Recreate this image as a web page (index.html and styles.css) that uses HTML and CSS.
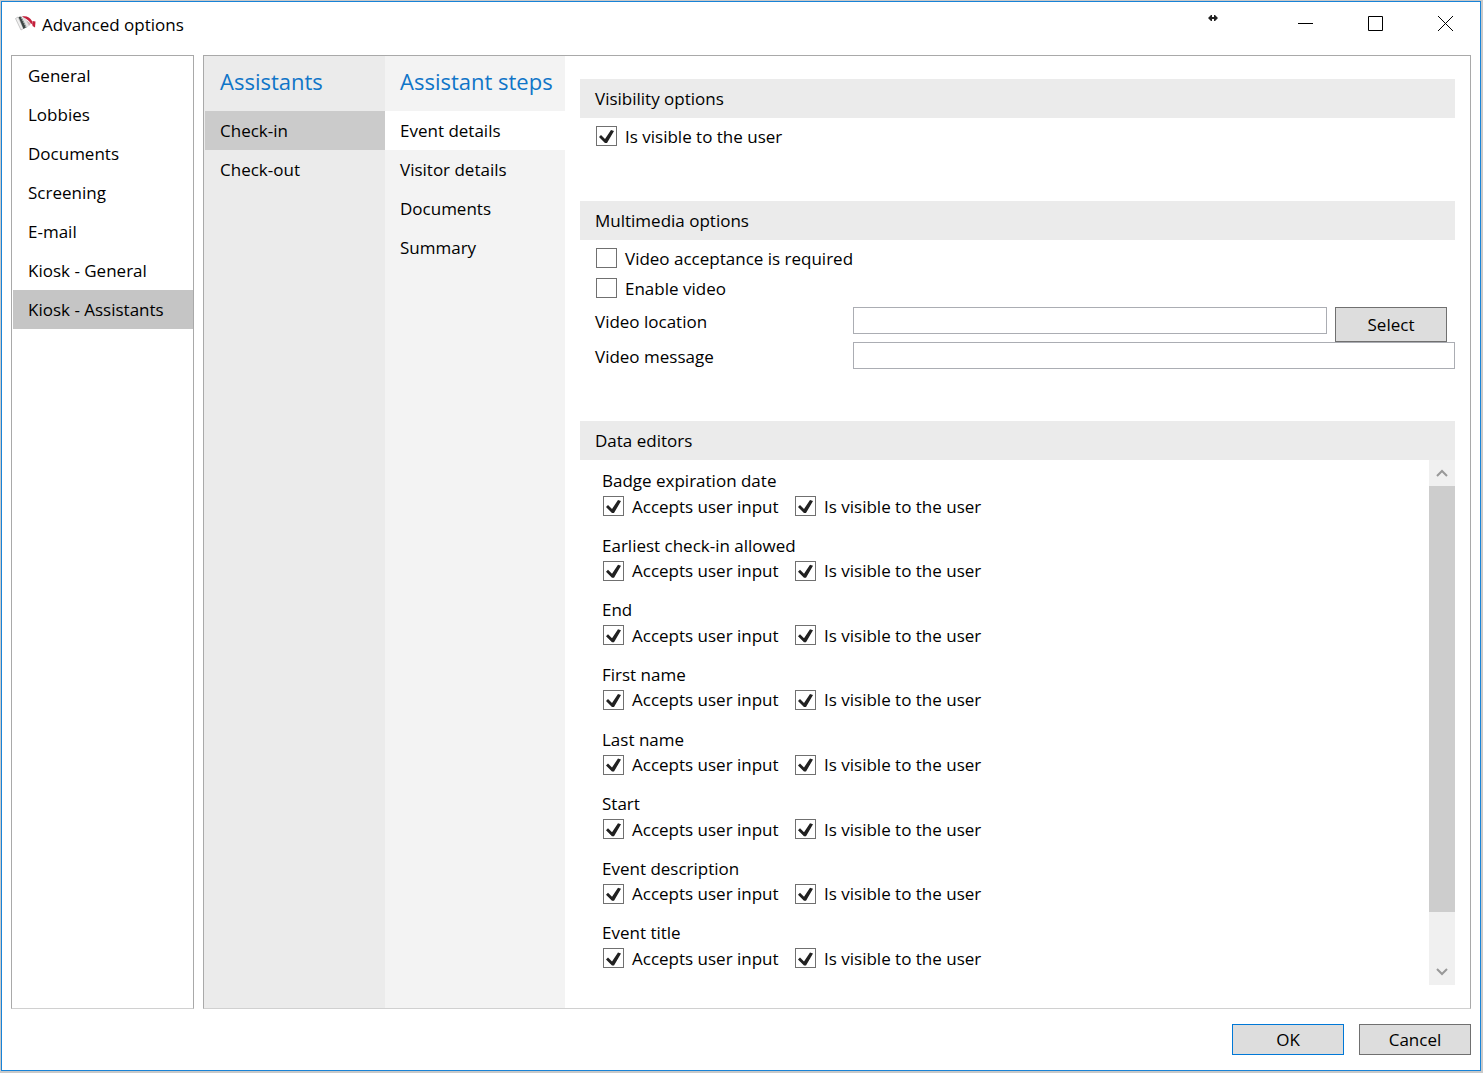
FILE: index.html
```html
<!DOCTYPE html>
<html lang="en">
<head>
    <meta charset="UTF-8">
    <meta name="viewport" content="width=device-width, initial-scale=1.0">
    <title>Advanced options</title>
    <link rel="stylesheet" href="styles.css">
</head>
<body>

<div class="window">
    <header class="titlebar">
        <svg class="app-icon" width="22" height="18" viewBox="0 0 22 18">
            <path d="M0.5 3.5L3 2L8.5 13.5L6 15Z" fill="#efefef" stroke="#bcbcbc" stroke-width="0.8"/>
            <path d="M3.5 2L5.5 1.5L11 12.5L8.5 14Z" fill="#3d4644"/>
            <path d="M6 1.5L11.5 12.5" stroke="#8d9794" stroke-width="1"/>
            <path d="M7.5 1.5L9 2L13.5 11L12 12Z" fill="#ececec" stroke="#c8c8c8" stroke-width="0.5"/>
            <path d="M7 1.5C11 0.5 15 2 17 6L18 10L15.5 8C13.5 5 11 3.5 7 1.5Z" fill="#c4203c"/>
            <path d="M11 5L16 8.5L14 11Z" fill="#cdb4b8"/>
            <path d="M17.5 6L20.5 6.5L20 12.5L17.5 11Z" fill="#c4203c"/>
        </svg>
        <h1 class="title">Advanced options</h1>
        <svg class="resize" width="10" height="8" viewBox="0 0 10 8">
            <path d="M0 4L3 1H4V3H6V1H7L10 4L7 7H6V5H4V7H3Z" fill="#222"/>
        </svg>
        <button class="caption" aria-label="Minimize">
            <svg width="15" height="15" viewBox="0 0 15 15"><path d="M0 7.5H15" stroke="#000"/></svg>
        </button>
        <button class="caption" aria-label="Maximize">
            <svg width="15" height="15" viewBox="0 0 15 15"><path d="M0.5 0.5H14.5V14.5H0.5Z" stroke="#000" fill="none"/></svg>
        </button>
        <button class="caption" aria-label="Close">
            <svg width="15" height="15" viewBox="0 0 15 15"><path d="M0 0L15 15M15 0L0 15" stroke="#000"/></svg>
        </button>
    </header>

    <div class="content">
        <nav class="box sidebar">
            <a class="item" href="#">General</a>
            <a class="item" href="#">Lobbies</a>
            <a class="item" href="#">Documents</a>
            <a class="item" href="#">Screening</a>
            <a class="item" href="#">E-mail</a>
            <a class="item" href="#">Kiosk - General</a>
            <a class="item selected" href="#">Kiosk - Assistants</a>
        </nav>

        <main class="box main">
            <nav class="column assistants">
                <h2>Assistants</h2>
                <a class="item selected" href="#">Check-in</a>
                <a class="item" href="#">Check-out</a>
            </nav>
            <nav class="column steps">
                <h2>Assistant steps</h2>
                <a class="item selected" href="#">Event details</a>
                <a class="item" href="#">Visitor details</a>
                <a class="item" href="#">Documents</a>
                <a class="item" href="#">Summary</a>
            </nav>

            <div class="options">
                <section class="section">
                    <h3>Visibility options</h3>
                    <label class="check"><input type="checkbox" checked>Is visible to the user</label>
                </section>

                <section class="section">
                    <h3>Multimedia options</h3>
                    <label class="check"><input type="checkbox">Video acceptance is required</label>
                    <label class="check"><input type="checkbox">Enable video</label>
                    <div class="fields">
                        <label for="location">Video location</label>
                        <div class="file">
                            <input class="text" type="text" id="location">
                            <button class="button select">Select</button>
                        </div>
                        <label for="message">Video message</label>
                        <input class="text" type="text" id="message">
                    </div>
                </section>

                <section class="section editors">
                    <h3>Data editors</h3>
                    <div class="scroller">
                        <div class="list">
                            <fieldset class="editor">
                                <legend>Badge expiration date</legend>
                                <label><input type="checkbox" checked>Accepts user input</label>
                                <label><input type="checkbox" checked>Is visible to the user</label>
                            </fieldset>
                            <fieldset class="editor">
                                <legend>Earliest check-in allowed</legend>
                                <label><input type="checkbox" checked>Accepts user input</label>
                                <label><input type="checkbox" checked>Is visible to the user</label>
                            </fieldset>
                            <fieldset class="editor">
                                <legend>End</legend>
                                <label><input type="checkbox" checked>Accepts user input</label>
                                <label><input type="checkbox" checked>Is visible to the user</label>
                            </fieldset>
                            <fieldset class="editor">
                                <legend>First name</legend>
                                <label><input type="checkbox" checked>Accepts user input</label>
                                <label><input type="checkbox" checked>Is visible to the user</label>
                            </fieldset>
                            <fieldset class="editor">
                                <legend>Last name</legend>
                                <label><input type="checkbox" checked>Accepts user input</label>
                                <label><input type="checkbox" checked>Is visible to the user</label>
                            </fieldset>
                            <fieldset class="editor">
                                <legend>Start</legend>
                                <label><input type="checkbox" checked>Accepts user input</label>
                                <label><input type="checkbox" checked>Is visible to the user</label>
                            </fieldset>
                            <fieldset class="editor">
                                <legend>Event description</legend>
                                <label><input type="checkbox" checked>Accepts user input</label>
                                <label><input type="checkbox" checked>Is visible to the user</label>
                            </fieldset>
                            <fieldset class="editor">
                                <legend>Event title</legend>
                                <label><input type="checkbox" checked>Accepts user input</label>
                                <label><input type="checkbox" checked>Is visible to the user</label>
                            </fieldset>
                        </div>
                        <div class="scrollbar">
                            <button class="arrow" aria-label="Scroll up">
                                <svg width="12" height="8" viewBox="0 0 12 8"><path d="M1 7L6 2L11 7" stroke="#999" stroke-width="2" fill="none"/></svg>
                            </button>
                            <div class="track"><div class="thumb"></div></div>
                            <button class="arrow" aria-label="Scroll down">
                                <svg width="12" height="8" viewBox="0 0 12 8"><path d="M1 1L6 6L11 1" stroke="#999" stroke-width="2" fill="none"/></svg>
                            </button>
                        </div>
                    </div>
                </section>
            </div>
        </main>
    </div>

    <footer class="footer">
        <button class="button default">OK</button>
        <button class="button">Cancel</button>
    </footer>
</div>

</body>
</html>
```
FILE: styles.css
```css
* {
    box-sizing: border-box;
    margin: 0;
    padding: 0;
}
body {
    height: 100vh;
    padding: 1px 2px 2px 1px;
    background-color: #c9c9c9;
    font-family: 'Open Sans', 'Noto Sans', sans-serif;
    font-size: 17px;
    color: #000;
}
button, input {
    font: inherit;
    color: inherit;
}
a {
    color: inherit;
    text-decoration: none;
}
.window {
    display: flex;
    flex-direction: column;
    height: 100%;
    background-color: #fff;
    border: 1px solid #1883d7;
}

/* Title bar */
.titlebar {
    display: flex;
    height: 53px;
    padding-left: 13px;
}
.app-icon {
    margin-top: 13px;
}
.title {
    flex: 1;
    margin-left: 5px;
    font-size: 17px;
    font-weight: normal;
    line-height: 45px;
}
.resize {
    margin: 12px 52px 0 0;
}
.caption {
    display: flex;
    align-items: center;
    justify-content: center;
    width: 70px;
    height: 43px;
    background: none;
    border: none;
}

/* Panes */
.content {
    display: flex;
    flex: 1;
    gap: 9px;
    min-height: 0;
    padding: 0 9px;
}
.box {
    border: 1px solid #a9a9a9;
    border-bottom-color: #d0d0d0;
}
.sidebar {
    width: 183px;
    padding-left: 1px;
}
.item {
    display: block;
    height: 39px;
    padding-left: 15px;
    line-height: 40px;
    white-space: nowrap;
}
.sidebar .selected {
    background-color: #c5c5c5;
}
.main {
    display: flex;
    flex: 1;
}
.column {
    width: 180px;
}
.column h2 {
    height: 55px;
    padding-left: 15px;
    font-size: 22px;
    font-weight: normal;
    line-height: 50px;
    color: #0f75c8;
    white-space: nowrap;
}
.assistants {
    width: 181px;
    padding-left: 1px;
    background-color: #ebebeb;
}
.assistants .selected {
    background-color: #cbcbcb;
}
.steps {
    background-color: #f3f3f3;
}
.steps .selected {
    background-color: #fff;
}

/* Options */
.options {
    display: flex;
    flex: 1;
    flex-direction: column;
    gap: 50px;
    padding: 23px 15px;
}
.section h3 {
    height: 39px;
    margin-bottom: 3px;
    padding-left: 15px;
    background-color: #ebebeb;
    font-size: 17px;
    font-weight: normal;
    line-height: 40px;
}
.check {
    display: flex;
    align-items: center;
    height: 30px;
    padding-left: 16px;
}
input[type="checkbox"] {
    appearance: none;
    width: 21px;
    height: 20px;
    margin-right: 8px;
    background-color: #fff;
    border: 1px solid #707070;
}
input[type="checkbox"]:checked::before {
    content: '';
    display: block;
    width: 19px;
    height: 18px;
    background-color: #212121;
    clip-path: polygon(2px 10px, 4px 8px, 8px 12px, 14px 3px, 17px 4px, 10px 16px, 8px 16px);
}
.fields {
    display: grid;
    grid-template-columns: 273px 1fr;
    padding: 4px 0 2px;
}
.fields label {
    height: 27px;
    padding-left: 15px;
    line-height: 30px;
}
.file {
    display: flex;
    gap: 8px;
    padding-right: 8px;
}
.text {
    flex: 1;
    width: 100%;
    height: 27px;
    padding: 0 4px;
    border: 1px solid #abadb3;
}
.button {
    width: 112px;
    height: 31px;
    background-color: #ddd;
    border: 1px solid #707070;
}
.button.select {
    height: 35px;
}
.button.default {
    border-color: #0078d7;
}

/* Data editors */
.editors {
    display: flex;
    flex: 1;
    flex-direction: column;
    min-height: 0;
}
.editors h3 {
    margin-bottom: 0;
}
.scroller {
    display: flex;
    flex: 1;
    min-height: 0;
}
.list {
    display: grid;
    flex: 1;
    grid-auto-rows: 1fr;
    padding: 8px 0 0 22px;
    overflow: hidden;
}
.editor {
    display: grid;
    grid-template-columns: 192px 1fr;
    align-content: start;
    border: none;
}
.editor legend {
    line-height: 25px;
}
.editor label {
    display: flex;
    align-items: center;
    height: 26px;
    padding-left: 1px;
}
.scrollbar {
    display: flex;
    flex-direction: column;
    width: 26px;
    background-color: #f0f0f0;
}
.arrow {
    display: flex;
    align-items: center;
    justify-content: center;
    height: 26px;
    background-color: #f0f0f0;
    border: none;
}
.track {
    flex: 1;
}
.thumb {
    height: 90%;
    background-color: #cdcdcd;
}

.footer {
    display: flex;
    justify-content: flex-end;
    gap: 15px;
    padding: 15px 9px;
}
```
